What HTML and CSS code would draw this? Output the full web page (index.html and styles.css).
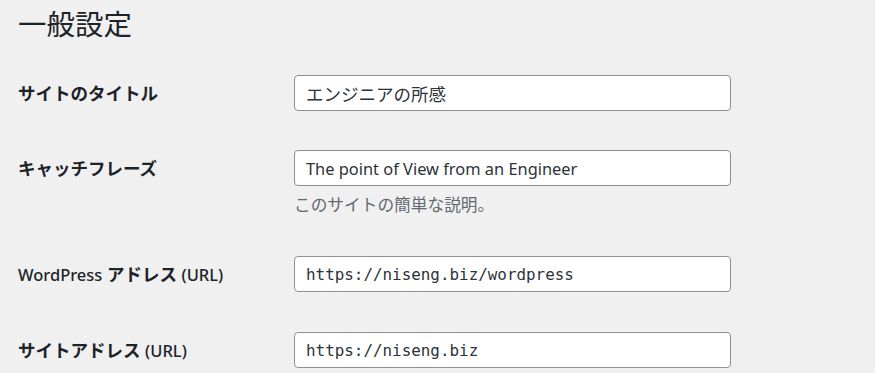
FILE: index.html
```html
<!DOCTYPE html>
<html lang="ja">
<head>
<meta charset="utf-8">
<title>一般設定</title>
<link rel="stylesheet" href="styles.css">
</head>
<body>
<div class="wrap">
  <h1 class="page-title">一般設定</h1>
  <div class="form-table">
    <div class="row">
      <label class="label" for="blogname">サイトのタイトル</label>
      <div class="field">
        <input id="blogname" class="text-input" type="text" value="エンジニアの所感">
      </div>
    </div>
    <div class="row">
      <label class="label" for="blogdescription">キャッチフレーズ</label>
      <div class="field">
        <input id="blogdescription" class="text-input latin-value" type="text" value="The point of View from an Engineer">
        <p class="description">このサイトの簡単な説明。</p>
      </div>
    </div>
    <div class="row">
      <label class="label" for="siteurl"><span class="latin">WordPress</span> アドレス <span class="latin">(URL)</span></label>
      <div class="field">
        <input id="siteurl" class="text-input code" type="text" value="https://niseng.biz/wordpress">
      </div>
    </div>
    <div class="row">
      <label class="label" for="home">サイトアドレス <span class="latin">(URL)</span></label>
      <div class="field">
        <input id="home" class="text-input code" type="text" value="https://niseng.biz">
      </div>
    </div>
  </div>
</div>
</body>
</html>
```
FILE: styles.css
```css
html, body {
  margin: 0;
  padding: 0;
  background: #f0f0f1;
}
body {
  font-family: "Noto Sans", "Noto Sans CJK JP", sans-serif;
  color: #1d2327;
  overflow: hidden;
}
.wrap {
  padding-left: 18px;
}
.page-title {
  margin: 6px 0 14px;
  font-size: 28.5px;
  line-height: 36px;
  font-weight: 400;
  color: #1d2327;
}
.row {
  display: grid;
  grid-template-columns: 276px 437px;
  padding: 19px 0 20px;
  align-items: start;
}
.label {
  font-size: 17.5px;
  line-height: 36px;
  font-weight: 700;
  color: #1d2327;
  white-space: nowrap;
}
.label .latin {
  font-size: 16.5px;
  font-weight: 500;
}
.field {
  display: flex;
  flex-direction: column;
}
.text-input {
  box-sizing: border-box;
  width: 437px;
  height: 36px;
  margin: 0;
  padding: 0 11px;
  border: 1px solid #8c8f94;
  border-radius: 4px;
  background: #fff;
  font-family: "Noto Sans", "Noto Sans CJK JP", sans-serif;
  font-size: 17.5px;
  color: #2c3338;
  outline: none;
}
.text-input.latin-value {
  font-size: 16.4px;
}
.text-input.code {
  font-family: "DejaVu Sans Mono", "Liberation Mono", monospace;
  font-size: 15.9px;
}
.description {
  margin: 6px 0 0;
  font-size: 16.7px;
  line-height: 25px;
  color: #646970;
}
```
